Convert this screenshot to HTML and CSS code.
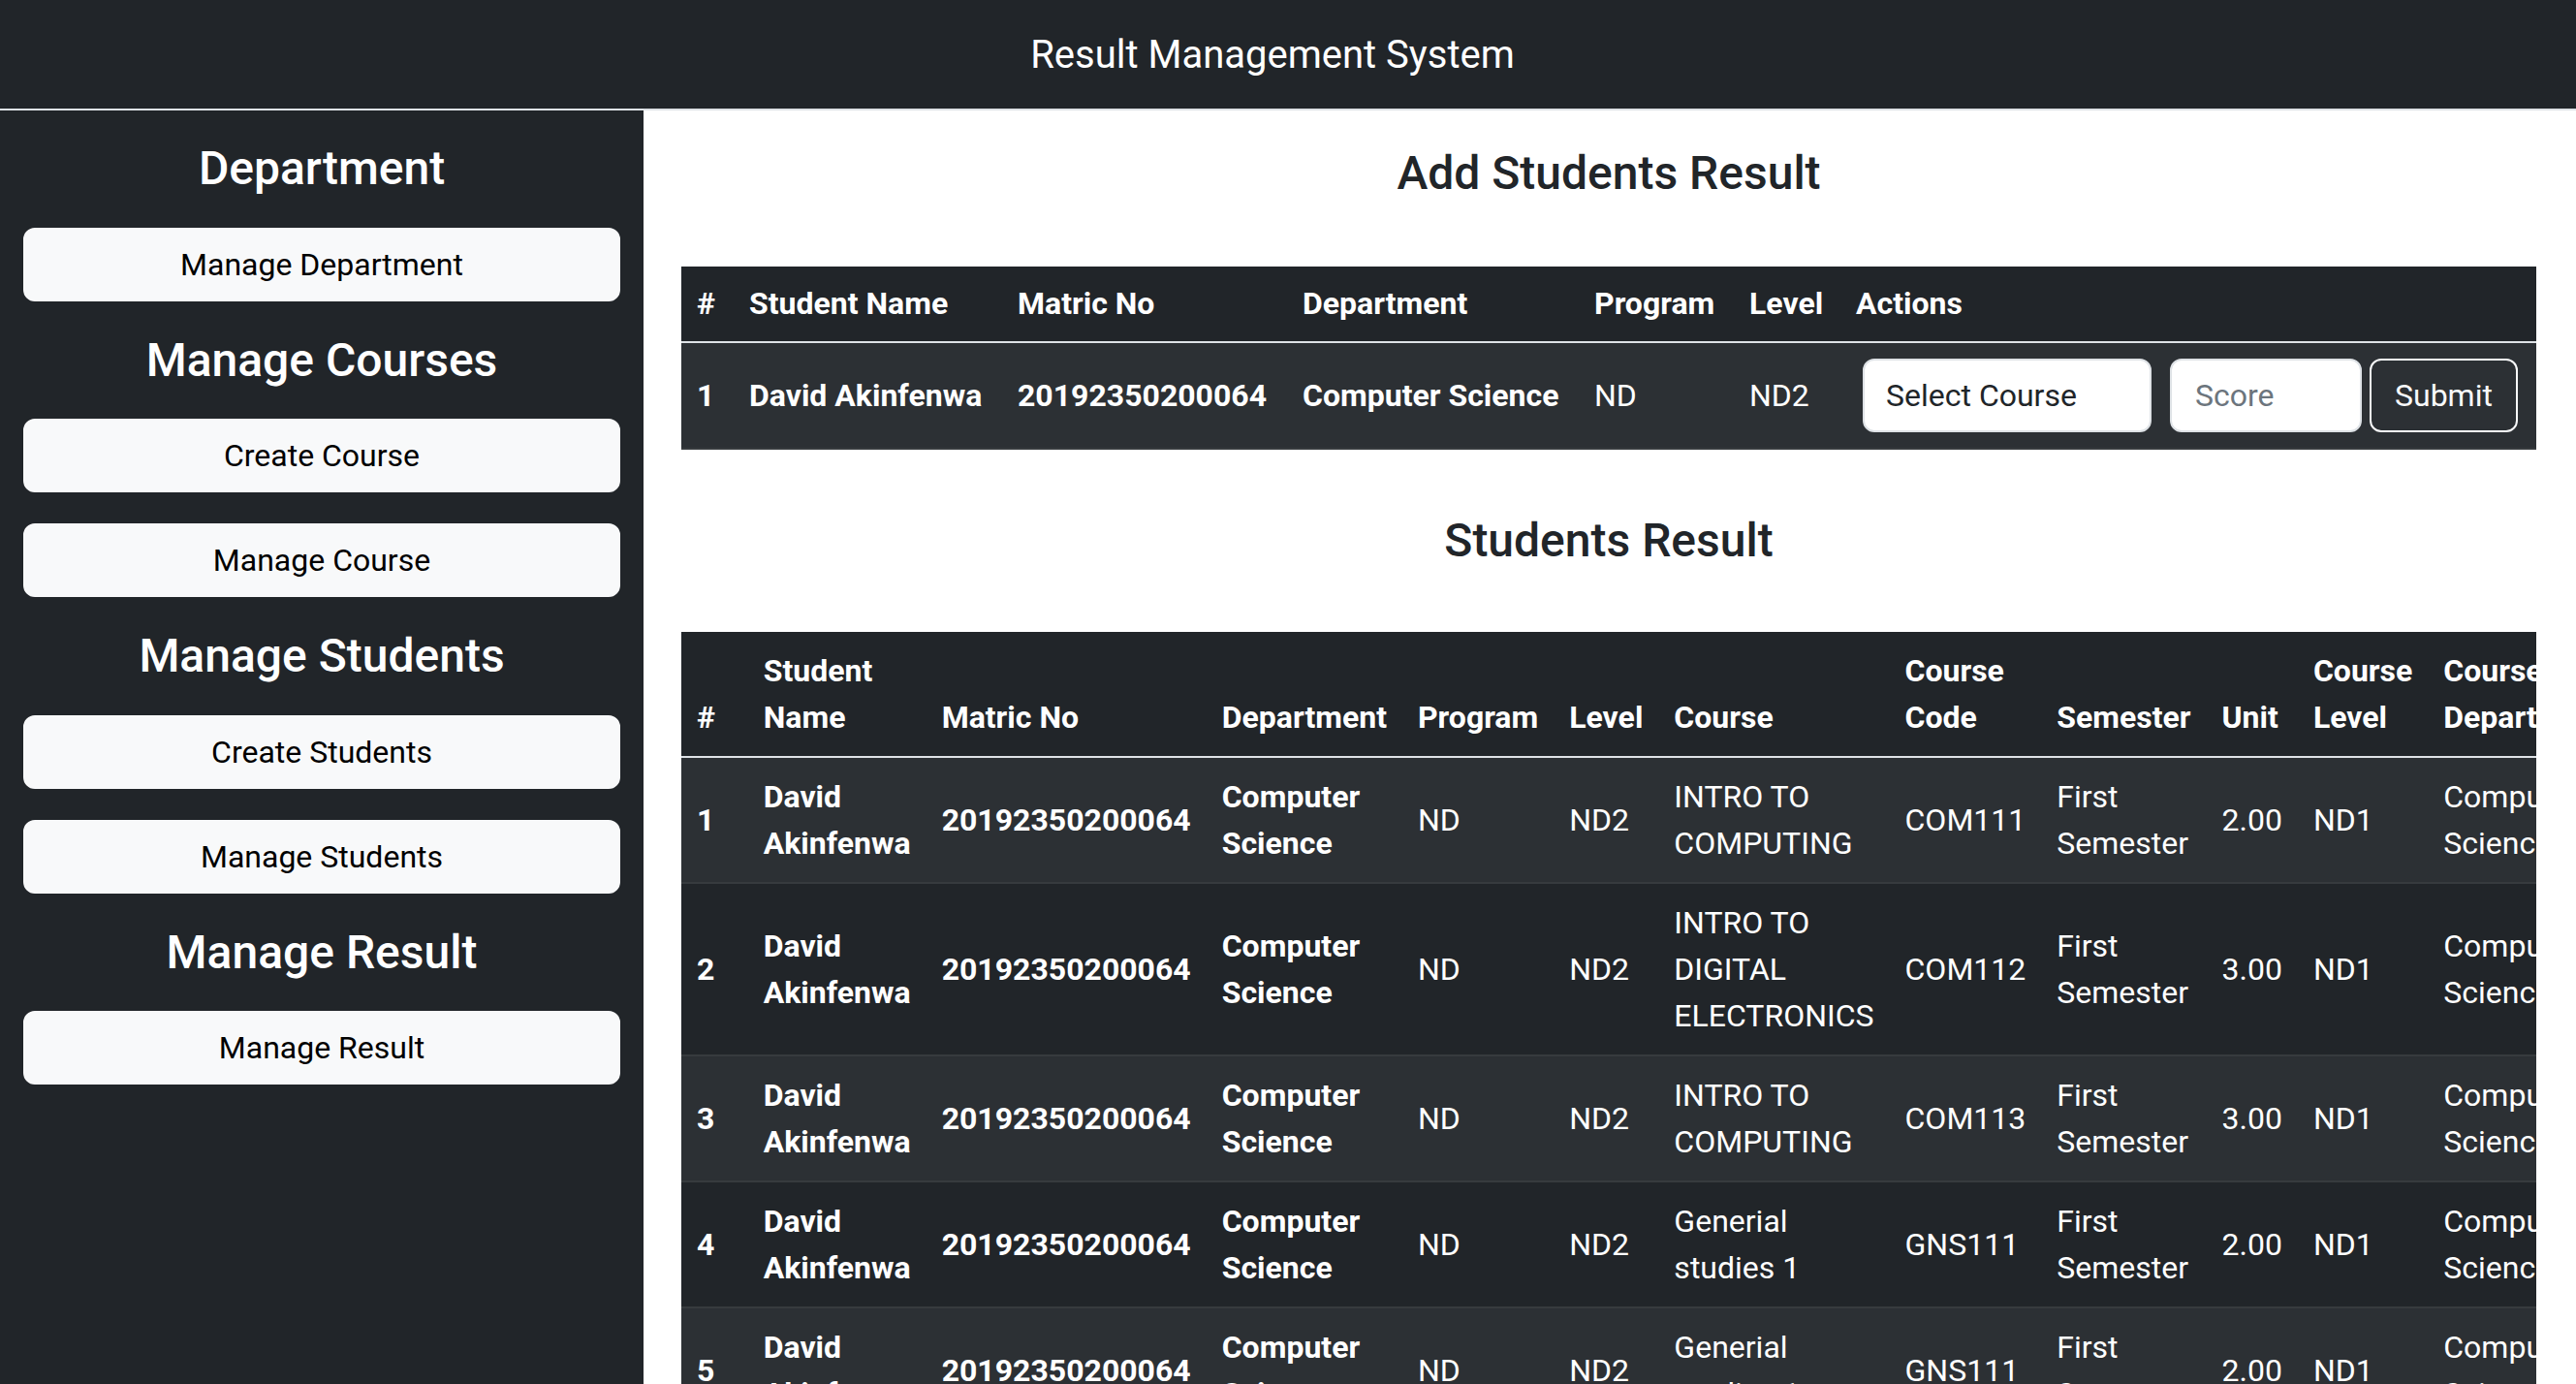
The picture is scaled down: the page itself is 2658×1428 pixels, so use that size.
FILE: index.html
```html
<!DOCTYPE html>
<html lang="en">
<head>
<meta charset="utf-8">
<title>Result Management System</title>
<link rel="stylesheet" href="styles.css">
</head>
<body>
<header class="topbar">
  <span class="brand">Result Management System</span>
</header>
<div class="layout">
  <aside class="sidebar">
    <h4 class="side-title">Department</h4>
    <a class="side-btn" href="#">Manage Department</a>
    <h4 class="side-title">Manage Courses</h4>
    <a class="side-btn" href="#">Create Course</a>
    <a class="side-btn" href="#">Manage Course</a>
    <h4 class="side-title">Manage Students</h4>
    <a class="side-btn" href="#">Create Students</a>
    <a class="side-btn" href="#">Manage Students</a>
    <h4 class="side-title">Manage Result</h4>
    <a class="side-btn" href="#">Manage Result</a>
  </aside>
  <main class="main">
    <h4 class="page-title">Add Students Result</h4>
    <table class="table table-add">
      <colgroup>
        <col class="c-num">
        <col class="c-name">
        <col class="c-matric">
        <col class="c-dept">
        <col class="c-prog">
        <col class="c-level">
        <col class="c-actions">
      </colgroup>
      <thead>
        <tr>
          <th>#</th>
          <th>Student Name</th>
          <th>Matric No</th>
          <th>Department</th>
          <th>Program</th>
          <th>Level</th>
          <th>Actions</th>
        </tr>
      </thead>
      <tbody>
        <tr>
          <th>1</th>
          <th>David Akinfenwa</th>
          <th>20192350200064</th>
          <th>Computer Science</th>
          <td>ND</td>
          <td>ND2</td>
          <td>
            <form class="action-form">
              <select class="course-select">
                <option>Select Course</option>
              </select>
              <input class="score-input" type="text" placeholder="Score">
              <button class="submit-btn" type="button">Submit</button>
            </form>
          </td>
        </tr>
      </tbody>
    </table>

    <h4 class="page-title second">Students Result</h4>
    <div class="table-wrap">
      <table class="table table-results">
        <thead>
          <tr>
            <th>#</th>
            <th>Student Name</th>
            <th>Matric No</th>
            <th>Department</th>
            <th>Program</th>
            <th>Level</th>
            <th>Course</th>
            <th>Course Code</th>
            <th>Semester</th>
            <th>Unit</th>
            <th>Course Level</th>
            <th>Course Department</th>
            <th>Score</th>
            <th>Grade</th>
          </tr>
        </thead>
        <tbody>
          <tr><th>1</th><th>David Akinfenwa</th><th>20192350200064</th><th>Computer Science</th><td>ND</td><td>ND2</td><td>INTRO TO COMPUTING</td><td>COM111</td><td>First Semester</td><td>2.00</td><td>ND1</td><td>Computer Science</td><td>70</td><td>A</td></tr>
          <tr><th>2</th><th>David Akinfenwa</th><th>20192350200064</th><th>Computer Science</th><td>ND</td><td>ND2</td><td>INTRO TO DIGITAL ELECTRONICS</td><td>COM112</td><td>First Semester</td><td>3.00</td><td>ND1</td><td>Computer Science</td><td>65</td><td>B</td></tr>
          <tr><th>3</th><th>David Akinfenwa</th><th>20192350200064</th><th>Computer Science</th><td>ND</td><td>ND2</td><td>INTRO TO COMPUTING</td><td>COM113</td><td>First Semester</td><td>3.00</td><td>ND1</td><td>Computer Science</td><td>58</td><td>C</td></tr>
          <tr><th>4</th><th>David Akinfenwa</th><th>20192350200064</th><th>Computer Science</th><td>ND</td><td>ND2</td><td>Generial studies 1</td><td>GNS111</td><td>First Semester</td><td>2.00</td><td>ND1</td><td>Computer Science</td><td>62</td><td>B</td></tr>
          <tr><th>5</th><th>David Akinfenwa</th><th>20192350200064</th><th>Computer Science</th><td>ND</td><td>ND2</td><td>Generial studies 1</td><td>GNS111</td><td>First Semester</td><td>2.00</td><td>ND1</td><td>Computer Science</td><td>62</td><td>B</td></tr>
          <tr><th>6</th><th>David Akinfenwa</th><th>20192350200064</th><th>Computer Science</th><td>ND</td><td>ND2</td><td>Generial studies 1</td><td>GNS111</td><td>First Semester</td><td>2.00</td><td>ND1</td><td>Computer Science</td><td>55</td><td>C</td></tr>
          <tr><th>7</th><th>David Akinfenwa</th><th>20192350200064</th><th>Computer Science</th><td>ND</td><td>ND2</td><td>INTRO TO COMPUTING</td><td>COM111</td><td>First Semester</td><td>2.00</td><td>ND1</td><td>Computer Science</td><td>48</td><td>D</td></tr>
          <tr><th>8</th><th>David Akinfenwa</th><th>20192350200064</th><th>Computer Science</th><td>ND</td><td>ND2</td><td>INTRO TO COMPUTING</td><td>COM113</td><td>First Semester</td><td>3.00</td><td>ND1</td><td>Computer Science</td><td>71</td><td>A</td></tr>
          <tr><th>9</th><th>David Akinfenwa</th><th>20192350200064</th><th>Computer Science</th><td>ND</td><td>ND2</td><td>Generial studies 1</td><td>GNS111</td><td>First Semester</td><td>2.00</td><td>ND1</td><td>Computer Science</td><td>60</td><td>B</td></tr>
          <tr><th>10</th><th>David Akinfenwa</th><th>20192350200064</th><th>Computer Science</th><td>ND</td><td>ND2</td><td>INTRO TO DIGITAL ELECTRONICS</td><td>COM112</td><td>First Semester</td><td>3.00</td><td>ND1</td><td>Computer Science</td><td>66</td><td>B</td></tr>
        </tbody>
      </table>
    </div>
  </main>
</div>
</body>
</html>
```

FILE: styles.css
```css
* {
  box-sizing: border-box;
}

body {
  margin: 0;
  font-family: Roboto, "Liberation Sans", sans-serif;
  font-size: 32px;
  line-height: 1.5;
  color: #212529;
  background: #fff;
}

.topbar {
  height: 114px;
  background: #212529;
  border-bottom: 2px solid #dee2e6;
  display: flex;
  align-items: center;
  justify-content: center;
  padding-top: 2px;
}

.brand {
  color: #fff;
  font-size: 40px;
  line-height: 60px;
  margin-right: 32px;
}

.layout {
  display: flex;
  min-height: calc(100vh - 114px);
}

.sidebar {
  width: 664px;
  flex: none;
  background: #212529;
  padding: 31px 24px;
  display: flex;
  flex-direction: column;
  gap: 32px;
}

.side-title {
  margin: 0;
  color: #fff;
  font-size: 48px;
  font-weight: 500;
  line-height: 57.6px;
  text-align: center;
}

.side-btn {
  display: block;
  background: #f8f9fa;
  border: 2px solid #f8f9fa;
  border-radius: 12px;
  color: #000;
  padding: 12px 24px;
  text-align: center;
  text-decoration: none;
}

.main {
  flex: 1;
  min-width: 0;
  padding: 36px 41px 0 39px;
}

.page-title {
  margin: 0 0 67px;
  text-align: center;
  font-size: 48px;
  font-weight: 500;
  line-height: 57.6px;
  color: #212529;
}

.page-title.second {
  margin-bottom: 66px;
}

.table {
  width: 100%;
  border-collapse: collapse;
  background: #212529;
  color: #fff;
}

.table th,
.table td {
  padding: 16px;
  border-bottom: 2px solid #373b3e;
  text-align: left;
  vertical-align: middle;
}

.table th {
  font-weight: 700;
}

.table thead th {
  vertical-align: bottom;
  border-bottom: 2px solid #dee2e6;
}

.table tbody tr:nth-child(odd) {
  background: #2c3034;
}

.table-add {
  table-layout: fixed;
  margin-bottom: 65px;
}

.c-num { width: 54px; }
.c-name { width: 277px; }
.c-matric { width: 294px; }
.c-dept { width: 301px; }
.c-prog { width: 160px; }
.c-level { width: 110px; }
.c-actions { width: auto; }

.table-add thead th {
  padding-top: 14px;
  padding-bottom: 15px;
}

.table-add th,
.table-add td {
  white-space: nowrap;
}

.action-form {
  display: flex;
  align-items: center;
  margin: 0;
}

.course-select,
.score-input {
  height: 76px;
  font: inherit;
  line-height: 48px;
  background: #fff;
  border: 2px solid #dee2e6;
  border-radius: 12px;
  padding: 12px 24px;
  color: #212529;
  outline: none;
}

.course-select {
  appearance: none;
  -webkit-appearance: none;
  width: 298px;
  margin-left: 7px;
  padding-left: 22px;
}

.score-input {
  width: 198px;
  margin-left: 19px;
}

.score-input::placeholder {
  color: #6c757d;
}

.submit-btn {
  margin-left: 8px;
  height: 76px;
  font: inherit;
  line-height: 48px;
  background: transparent;
  border: 2px solid #f8f9fa;
  border-radius: 12px;
  color: #f8f9fa;
  padding: 12px 24px;
}

.table-wrap {
  overflow-x: auto;
}
```
